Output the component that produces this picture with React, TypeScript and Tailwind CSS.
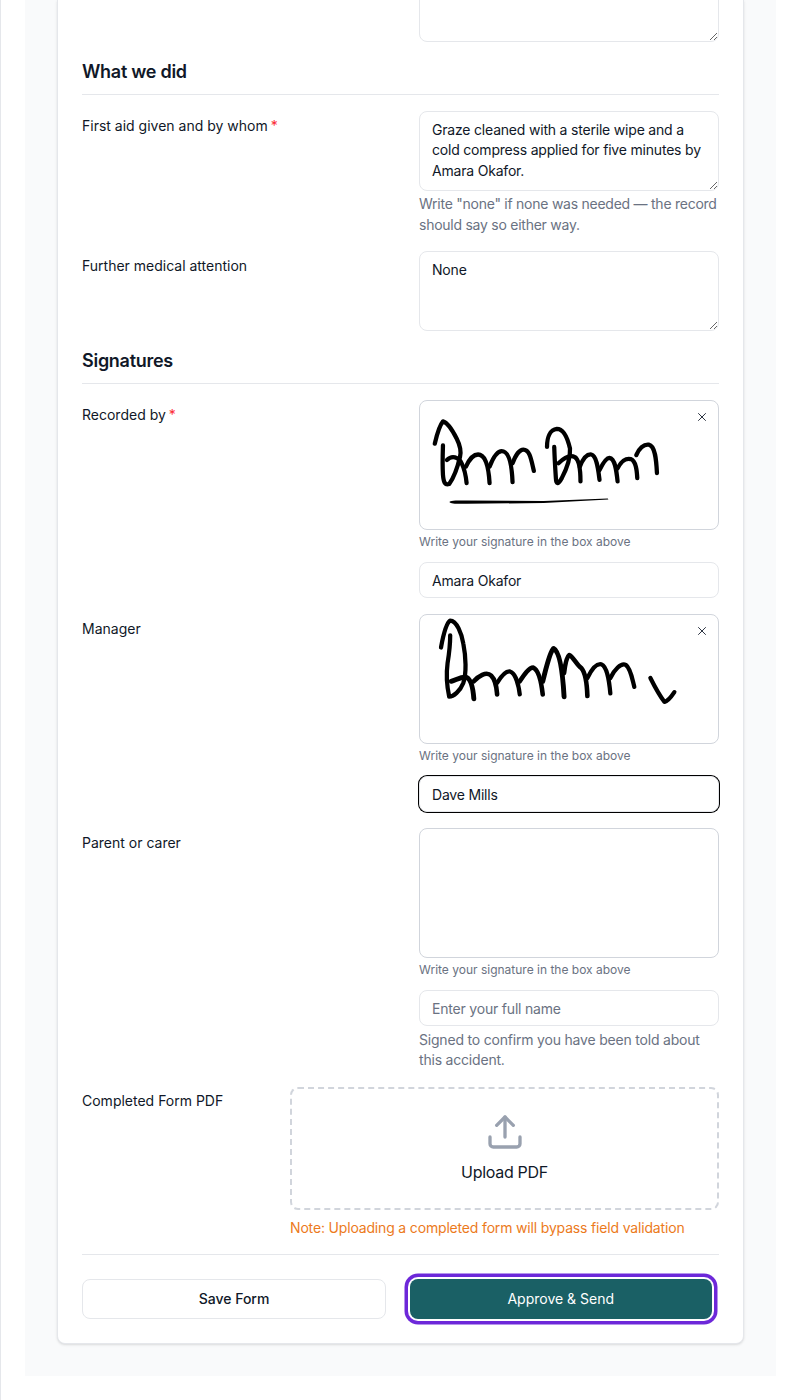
import { Upload, X } from "lucide-react";
import type { ReactNode } from "react";

const inputClass =
  "block w-full rounded-lg border border-gray-200 bg-white px-3 text-sm tracking-[-0.014em] text-gray-900 placeholder:text-gray-500 focus:outline-none";

function SectionHeading({ children }: { children: ReactNode }) {
  return (
    <h3 className="mt-4 mb-4 border-b border-gray-200 pb-2 text-lg leading-7 font-semibold tracking-[-0.015em] text-gray-900">
      {children}
    </h3>
  );
}

function Label({ text, required }: { text: string; required?: boolean }) {
  return (
    <label className="block pt-1 text-sm leading-[21px] font-normal text-gray-900">
      {text}
      {required && <span className="ml-[3px] text-red-500">*</span>}
    </label>
  );
}

function Row({ children }: { children: ReactNode }) {
  return <div className="grid grid-cols-[337px_300px]">{children}</div>;
}

function TextBlock({ value }: { value: string }) {
  return (
    <textarea
      readOnly
      defaultValue={value}
      className="block h-20 w-full rounded-lg border border-gray-200 bg-white px-3 py-2 text-sm leading-[20.4px] tracking-[-0.014em] text-gray-900 focus:outline-none"
    />
  );
}

function Signature({
  name,
  focused,
  viewBox,
  strokes,
}: {
  name: string;
  focused?: boolean;
  viewBox?: string;
  strokes?: ReactNode;
}) {
  return (
    <div>
      <div className="relative h-[130px] rounded-lg border border-gray-300 bg-white">
        {strokes && (
          <svg viewBox={viewBox} className="block h-full w-full" fill="none" stroke="#000" strokeLinecap="round" strokeLinejoin="round" strokeWidth="13">
            {strokes}
          </svg>
        )}
        {strokes && (
          <button className="absolute top-[9px] right-[9px] text-gray-900">
            <X size={14} strokeWidth={1.5} />
          </button>
        )}
      </div>
      <p className="mt-1 text-xs leading-4 text-gray-500">Write your signature in the box above</p>
      <input
        readOnly
        defaultValue={name}
        placeholder="Enter your full name"
        className={`${inputClass} mt-3 h-9 ${focused ? "border-black ring-1 ring-black" : ""}`}
      />
    </div>
  );
}

const signatureOne = (
  <>
    <path d="M68 145C75 115 82 90 93 77C105 80 120 100 135 130C145 150 150 165 145 185C138 215 125 250 112 268C100 272 95 265 93 240C91 210 92 180 93 150" />
    <path d="M105 195C120 180 140 185 150 205C160 225 163 245 165 265" />
    <path d="M163 215C172 195 185 178 200 178C222 178 232 215 235 265" />
    <path d="M235 215C245 190 258 168 272 168C296 168 303 215 305 262" />
    <path d="M305 205C312 185 325 163 338 163C358 163 362 195 370 228" />
    <path d="M410 155C410 125 420 102 440 100C460 100 472 125 480 160C482 190 468 225 455 250C445 268 438 272 437 250C435 220 433 185 432 155" />
    <path d="M445 205C460 190 480 178 495 186C510 196 512 230 512 260" />
    <path d="M510 215C520 190 532 176 545 178C562 182 566 225 570 255" />
    <path d="M570 225C580 205 590 188 600 188C618 190 622 230 625 260" />
    <path d="M625 220C635 200 650 188 665 192C682 198 684 230 685 250" />
    <path d="M682 180C690 160 705 146 720 148C740 152 743 195 745 235" />
    <path d="M113 323C115 318 125 318 165 318L400 320L595 312L597 315L400 326L165 328C125 329 115 328 113 323Z" fill="#000" stroke="none" />
  </>
);

const signatureTwo = (
  <>
    <path d="M87 112C92 85 100 40 115 30C135 30 150 70 155 100C163 140 165 190 155 220C145 245 125 262 112 262C105 230 103 190 107 160C112 130 115 100 115 75" />
    <path d="M118 215C135 210 150 200 165 203C180 210 185 240 187 268" strokeWidth="15" />
    <path d="M187 215C200 200 225 183 240 198C255 213 256 235 258 255" strokeWidth="14" />
    <path d="M258 220C270 200 285 183 297 185C315 190 324 230 327 255" />
    <path d="M327 215C340 195 355 173 368 173C385 180 393 220 397 255" strokeWidth="14" />
    <path d="M397 215C405 185 418 125 430 115C450 125 458 190 462 262" strokeWidth="15" />
    <path d="M462 190C465 165 470 140 478 135C490 140 500 165 515 175C528 190 532 230 533 260" strokeWidth="14" />
    <path d="M533 205C545 180 560 160 575 163C595 170 600 220 603 252" />
    <path d="M603 205C615 180 635 158 650 165C665 175 670 210 676 232" />
    <path d="M725 205C735 225 750 255 768 278C780 275 790 260 798 248" />
  </>
);

export default function App() {
  return (
    <div className="h-[1400px] overflow-hidden border-l border-gray-200 bg-white pl-6 font-['Inter',sans-serif] [font-optical-sizing:none]">
      <div className="w-[751px] bg-gray-50 px-8 pb-8">
        <div className="rounded-lg rounded-t-none border border-t-0 border-gray-200 bg-white px-6 pb-6 shadow-sm">
          <Row>
            <div />
            <textarea readOnly className={`${inputClass} -mt-[38px] h-20`} />
          </Row>

          <SectionHeading>What we did</SectionHeading>
          <div className="flex flex-col gap-4">
            <Row>
              <Label text="First aid given and by whom" required />
              <div>
                <TextBlock value="Graze cleaned with a sterile wipe and a cold compress applied for five minutes by Amara Okafor." />
                <p className="mt-[2px] text-sm leading-[21px] tracking-[-0.018em] text-gray-500">
                  Write "none" if none was needed — the record should say so either way.
                </p>
              </div>
            </Row>
            <Row>
              <Label text="Further medical attention" />
              <TextBlock value="None" />
            </Row>
          </div>

          <SectionHeading>Signatures</SectionHeading>
          <div className="flex flex-col gap-4">
            <Row>
              <Label text="Recorded by" required />
              <Signature name="Amara Okafor" viewBox="27 15 900 390" strokes={signatureOne} />
            </Row>
            <Row>
              <Label text="Manager" />
              <Signature name="Dave Mills" focused viewBox="27 13 900 390" strokes={signatureTwo} />
            </Row>
            <Row>
              <Label text="Parent or carer" />
              <div>
                <Signature name="" />
                <p className="mt-1 text-sm leading-5 tracking-[-0.014em] text-gray-500">
                  Signed to confirm you have been told about this accident.
                </p>
              </div>
            </Row>
          </div>

          <div className="mt-[17px] grid grid-cols-[208px_429px]">
            <div className="-mt-px">
              <Label text="Completed Form PDF" />
            </div>
            <div>
              <div className="flex h-[123px] flex-col items-center justify-center rounded-lg border-2 border-dashed border-gray-300 bg-white pb-[2px]">
                <Upload size={40} className="text-gray-400" />
                <span className="mt-2 text-base tracking-[-0.019em] text-gray-900">Upload PDF</span>
              </div>
              <p className="mt-[7px] text-sm leading-[21px] tracking-[-0.012em] text-[#ec7a1c]">
                Note: Uploading a completed form will bypass field validation
              </p>
            </div>
          </div>

          <div className="mt-4 flex border-t border-gray-200 pt-6">
            <button className="h-10 w-[304px] rounded-lg border border-gray-200 bg-white text-sm font-medium text-gray-900">
              Save Form
            </button>
            <button className="ml-6 h-10 w-[301.5px] rounded-lg bg-[#1a6065] text-sm font-normal text-white ring-[3.5px] ring-[#6d28d9] ring-offset-2">
              Approve &amp; Send
            </button>
          </div>
        </div>
      </div>
    </div>
  );
}
